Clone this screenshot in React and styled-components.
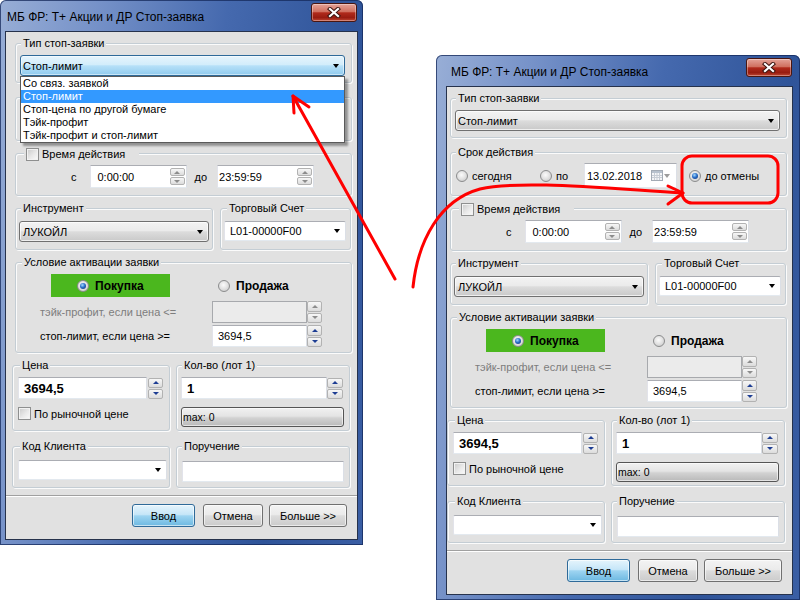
import React from "react";
import styled, { createGlobalStyle, css } from "styled-components";

const FONT = `"Liberation Sans", Arial, sans-serif`;
const BG = "#e1e1e1";

const px = v => (typeof v === "number" ? `${v}px` : v);

const GlobalStyle = createGlobalStyle`
  html, body { margin: 0; padding: 0; background: #fff; }
  body { font-family: ${FONT}; font-size: 11px; color: #000; }
`;

const Canvas = styled.div`
  position: relative;
  width: 800px;
  height: 600px;
  overflow: hidden;
  background: #fff;
`;

// window chrome
const Window = styled.div`
  position: absolute;
  left: ${p => p.$x}px;
  top: ${p => p.$y}px;
  display: flex;
  flex-direction: column;
  padding: 0 ${p => p.$frameR}px 6px ${p => p.$frameL}px;
  border-radius: 6px 6px 0 0;
  background: linear-gradient(100deg, #98aed6 0%, #7591c8 22%, #4569ae 50%, #2f5499 78%, #3a5ea4 100%);
  box-shadow: inset 0 0 0 1px rgba(20, 40, 90, 0.75);
`;

const TitleBar = styled.div`
  height: 32px;
  display: flex;
  justify-content: space-between;
  align-items: flex-start;
`;

const Title = styled.div`
  padding: 9px 0 0 ${p => p.$pad}px;
  font-size: 12px;
  line-height: 16px;
  color: #000;
  white-space: nowrap;
`;

const CloseButton = styled.div`
  box-sizing: border-box;
  width: 46px;
  height: 19px;
  margin-top: 3px;
  border: 1px solid #4a1610;
  border-radius: 3px;
  background: linear-gradient(#e4a398 0%, #d0705f 45%, #b02a1b 52%, #981c10 80%, #c04834 100%);
  box-shadow: inset 0 0 0 1px rgba(255, 255, 255, 0.35);
  display: flex;
  align-items: center;
  justify-content: center;
`;

const Client = styled.div`
  width: ${p => p.$w}px;
  background: ${BG};
  box-shadow: 0 0 0 1px #26324c;
  display: flex;
  flex-direction: column;
`;

const Body = styled.div`
  display: flex;
  flex-direction: column;
  padding: 11px 5px 7px ${p => p.$padL}px;
`;

const Footer = styled.div`
  display: flex;
  justify-content: flex-end;
  border-top: 1px solid #a0a0a0;
  box-shadow: inset 0 1px 0 #fff;
  padding: 8px 10px 12px;
`;

// group boxes
const Group = styled.div`
  position: relative;
  box-sizing: border-box;
  width: ${p => (p.$w ? `${p.$w}px` : "auto")};
  height: ${p => p.$h}px;
  margin-top: ${p => p.$mt ?? 0}px;
  padding: ${p => p.$pad};
  border: 1px solid #c4cdd4;
  border-radius: 3px;
  box-shadow: inset 1px 1px 0 #fbfbfb, 1px 1px 0 #fbfbfb;
`;

const Legend = styled.span`
  position: absolute;
  top: ${p => p.$top ?? -8}px;
  left: ${p => p.$x ?? 5}px;
  display: flex;
  align-items: center;
  gap: 3px;
  padding: 0 ${p => p.$pr ?? 2}px 0 2px;
  line-height: 14px;
  background: ${BG};
  white-space: nowrap;
  visibility: ${p => (p.$hidden ? "hidden" : "visible")};
`;

const Row = styled.div`
  display: flex;
  gap: ${p => p.$gap ?? 7}px;
  margin-top: ${p => p.$mt ?? 0}px;
  margin-left: ${p => p.$ml ?? 0}px;
`;

const Line = styled.div`
  display: flex;
  align-items: center;
  margin-top: ${p => p.$mt ?? 0}px;
  visibility: ${p => (p.$hidden ? "hidden" : "visible")};
`;

const Label = styled.span`
  margin-left: ${p => p.$ml ?? 0}px;
  white-space: nowrap;
  color: ${p => (p.$muted ? "#7d7d7d" : "#000")};
`;

// controls
const comboKinds = {
  gray: css`
    border: 1px solid #707070;
    border-radius: 3px;
    background: linear-gradient(#f3f3f3 0%, #ebebeb 45%, #dcdcdc 52%, #c9c9c9 100%);
    box-shadow: inset 0 0 0 1px rgba(255, 255, 255, 0.7);
  `,
  focus: css`
    border: 1px solid #2f6a99;
    border-radius: 3px;
    background: linear-gradient(#e6f4fc 0%, #d3edfb 45%, #b6e0f8 52%, #90cbee 100%);
    box-shadow: inset 0 0 0 1px rgba(255, 255, 255, 0.5);
  `,
  white: css`
    border: 1px solid;
    border-color: #abadb3 #dbdfe6 #e3e9ef #e2e3ea;
    border-radius: 2px;
    background: #fff;
  `,
};

const ComboHolder = styled.div`
  position: relative;
`;

const Combo = styled.div`
  box-sizing: border-box;
  width: ${p => (p.$w ? `${p.$w}px` : "auto")};
  height: ${p => p.$h ?? 21}px;
  display: flex;
  align-items: center;
  justify-content: space-between;
  padding: 0 5px 0 ${p => p.$pl ?? 3}px;
  white-space: nowrap;
  ${p => comboKinds[p.$kind]}
`;

const Arrow = styled.span`
  width: 0;
  height: 0;
  flex-shrink: 0;
  margin-left: ${p => px(p.$ml ?? 0)};
  border-left: 3.5px solid transparent;
  border-right: 3.5px solid transparent;
  border-top: 4px solid ${p => p.$color || "#000"};
`;

const DropList = styled.div`
  position: absolute;
  top: 100%;
  left: 0;
  right: 0;
  z-index: 5;
  background: #fff;
  border: 1px solid #5a5a5a;
  box-shadow: 3px 3px 2px rgba(0, 0, 0, 0.35);
`;

const DropItem = styled.div`
  height: 13px;
  line-height: 13px;
  padding-left: 2px;
  white-space: nowrap;
  ${p => p.$sel && css`background: #3399ff; color: #fff;`}
`;

const Field = styled.div`
  box-sizing: border-box;
  width: ${p => p.$w}px;
  height: ${p => p.$h ?? 22}px;
  margin-left: ${p => p.$ml ?? 0}px;
  display: flex;
  align-items: center;
  padding: 0 ${p => p.$pr ?? 0}px 0 ${p => p.$pl ?? 5}px;
  border: 1px solid;
  border-color: ${p => (p.$disabled ? "#a7a9ad" : "#abadb3 #dbdfe6 #e3e9ef #e2e3ea")};
  background: ${p => (p.$disabled ? "#ebebeb" : "#fff")};
  font-size: ${p => (p.$bold ? 13 : 11)}px;
  font-weight: ${p => (p.$bold ? 700 : 400)};
  white-space: nowrap;
`;

const SpinBox = styled.div`
  display: flex;
  flex-direction: column;
  gap: 1px;
  flex-shrink: 0;
  width: ${p => p.$w}px;
  height: ${p => p.$h}px;
  margin-left: ${p => px(p.$ml ?? 0)};
  margin-right: ${p => px(p.$mr ?? 0)};
`;

const SpinBtn = styled.div`
  flex: 1;
  box-sizing: border-box;
  border: 1px solid #b2b2b2;
  border-radius: 2px;
  background: linear-gradient(#f7f7f7, #dcdcdc);
  display: flex;
  align-items: center;
  justify-content: center;
`;

const Tri = styled.span`
  width: 0;
  height: 0;
  border-left: 3px solid transparent;
  border-right: 3px solid transparent;
  ${p => (p.$up ? css`border-bottom: 3px solid ${p.$c};` : css`border-top: 3px solid ${p.$c};`)}
`;

function Spin({ w = 15, h, active, ml, mr }) {
  const c = active ? "#1d3d93" : "#8c8c8c";
  return (
    <SpinBox $w={w} $h={h} $ml={ml} $mr={mr}>
      <SpinBtn><Tri $up $c={c} /></SpinBtn>
      <SpinBtn><Tri $c={c} /></SpinBtn>
    </SpinBox>
  );
}

const Radio = styled.span`
  box-sizing: border-box;
  width: 12px;
  height: 12px;
  flex-shrink: 0;
  border-radius: 50%;
  border: 1px solid #8b8c8d;
  background: radial-gradient(circle at 45% 40%, #fbfbfb 0%, #e4e4e4 45%, #c2c2c2 100%);
  display: inline-flex;
  align-items: center;
  justify-content: center;
  ${p => p.$on && css`
    &::after {
      content: "";
      width: 6px;
      height: 6px;
      border-radius: 50%;
      background: radial-gradient(circle at 40% 35%, #a6dbff 0%, #2a6fc9 45%, #0b2a6e 100%);
    }
  `}
`;

const Check = styled.span`
  box-sizing: border-box;
  width: 13px;
  height: 13px;
  flex-shrink: 0;
  border: 1px solid #8e8f8f;
  background: linear-gradient(135deg, #c9c9c9 0%, #e9e9e9 55%, #fbfbfb 100%);
  box-shadow: inset 0 0 0 1px #f2f2f2;
`;

const Option = styled.label`
  display: flex;
  align-items: center;
  gap: ${p => p.$gap ?? 4}px;
  width: ${p => (p.$w ? `${p.$w}px` : "auto")};
  margin-left: ${p => p.$ml ?? 0}px;
  white-space: nowrap;
`;

const SideOption = styled.div`
  box-sizing: border-box;
  display: flex;
  align-items: center;
  gap: 6px;
  height: 23px;
  width: ${p => (p.$active ? "119px" : "auto")};
  margin-left: ${p => p.$ml ?? 0}px;
  padding-left: ${p => (p.$active ? 26 : 0)}px;
  background: ${p => (p.$active ? "#4bb71e" : "transparent")};
  font-size: 12px;
  font-weight: 700;
`;

const PriceGrid = styled.div`
  display: grid;
  grid-template-columns: 172px 95px 15px;
  row-gap: 2px;
  align-items: center;
  margin: 4px 0 0 -35px;
  padding-left: 24px;
`;

const MaxButton = styled.div`
  box-sizing: border-box;
  width: 163px;
  height: 20px;
  margin-top: 8px;
  display: flex;
  align-items: center;
  padding-left: 1px;
  font-size: 10.5px;
  border: 1px solid #555;
  border-radius: 3px;
  background: linear-gradient(#f1f1f1 0%, #e4e4e4 45%, #d2d2d2 55%, #b9b9b9 100%);
  box-shadow: inset 0 0 0 1px rgba(255, 255, 255, 0.6);
`;

const Button = styled.div`
  box-sizing: border-box;
  width: ${p => p.$w}px;
  height: 23px;
  margin-left: ${p => p.$ml ?? 0}px;
  display: flex;
  align-items: center;
  justify-content: center;
  border-radius: 3px;
  border: 1px solid ${p => (p.$primary ? "#2f6a99" : "#707070")};
  background: ${p =>
    p.$primary
      ? "linear-gradient(#e5f4fc 0%, #c6e6f8 45%, #9dd4f1 52%, #6cb8e1 100%)"
      : "linear-gradient(#f3f3f3 0%, #ebebeb 45%, #dcdcdc 52%, #cbcbcb 100%)"};
  box-shadow: inset 0 0 0 1px rgba(255, 255, 255, 0.6);
`;

const Overlay = styled.svg`
  position: absolute;
  left: 0;
  top: 0;
  z-index: 20;
  pointer-events: none;
`;

const orderTypes = [
  "Со связ. заявкой",
  "Стоп-лимит",
  "Стоп-цена по другой бумаге",
  "Тэйк-профит",
  "Тэйк-профит и стоп-лимит",
];

function CloseIcon() {
  return (
    <svg width="14" height="11" viewBox="0 0 14 11">
      <path d="M3 2 L11 9 M11 2 L3 9" stroke="#3d1510" strokeWidth="4.2" strokeLinecap="square" />
      <path d="M3 2 L11 9 M11 2 L3 9" stroke="#fff" strokeWidth="2.2" strokeLinecap="square" />
    </svg>
  );
}

function CalendarIcon() {
  return (
    <svg width="12" height="11" viewBox="0 0 12 11" style={{ marginLeft: "auto" }}>
      <rect x="0.5" y="0.5" width="11" height="10" fill="#f5f6f8" stroke="#a3abb5" />
      <rect x="1" y="1" width="10" height="2" fill="#b8c2ce" />
      <path d="M1 5.5H11M1 7.5H11M3.5 3V10M6 3V10M8.5 3V10" stroke="#c7cdd5" strokeWidth="1" />
    </svg>
  );
}

function Dialog({ x, y, frameL, frameR, clientW, padL, titlePad, open }) {
  return (
    <Window $x={x} $y={y} $frameL={frameL} $frameR={frameR}>
      <TitleBar>
        <Title $pad={titlePad}>МБ ФР: Т+ Акции и ДР Стоп-заявка</Title>
        <CloseButton><CloseIcon /></CloseButton>
      </TitleBar>
      <Client $w={clientW}>
        <Body $padL={padL}>
          <Group $h={40} $pad="11px 6px 0 4px">
            <Legend>Тип стоп-заявки</Legend>
            <ComboHolder>
              <Combo $kind={open ? "focus" : "gray"} $pl={2}>
                Стоп-лимит
                <Arrow />
              </Combo>
              {open && (
                <DropList>
                  {orderTypes.map(t => (
                    <DropItem key={t} $sel={t === "Стоп-лимит"}>{t}</DropItem>
                  ))}
                </DropList>
              )}
            </ComboHolder>
          </Group>

          {/* under the open list this group is covered */}
          <Group $h={44} $mt={14} $pad="10px 0 0 5px">
            <Legend $hidden={open}>Срок действия</Legend>
            <Line $hidden={open}>
              <Option $w={84}><Radio />сегодня</Option>
              <Option $w={44}><Radio />по</Option>
              <Field $w={93} $h={25} $pl={2} $pr={6}>
                13.02.2018
                <CalendarIcon />
                <Arrow $color="#9c9c9c" $ml={1} />
              </Field>
              <Option $ml={12}><Radio $on />до отмены</Option>
            </Line>
          </Group>

          <Group $h={43} $mt={12} $pad="11px 0 0 55px">
            <Legend $x={8} $top={-7} $pr={14}><Check />Время действия</Legend>
            <Line>
              <Label>с</Label>
              <Field $w={97} $h={23} $pl={7} $ml={13}>
                0:00:00
                <Spin h={17} ml="auto" mr={1} />
              </Field>
              <Label $ml={8}>до</Label>
              <Field $w={97} $h={23} $pl={1} $ml={10}>
                23:59:59
                <Spin h={17} ml="auto" mr={1} />
              </Field>
            </Line>
          </Group>

          <Row $mt={12}>
            <Group $w={198} $h={42} $pad="12px 0 0 3px">
              <Legend>Инструмент</Legend>
              <Combo $kind="gray" $w={190}>ЛУКОЙЛ<Arrow /></Combo>
            </Group>
            <Group $w={131} $h={42} $pad="12px 0 0 3px">
              <Legend $x={6}>Торговый Счет</Legend>
              <Combo $kind="white" $w={122} $h={20} $pl={5}>L01-00000F00<Arrow /></Combo>
            </Group>
          </Row>

          <Group $h={91} $mt={12} $pad="11px 0 0 35px">
            <Legend $x={6}>Условие активации заявки</Legend>
            <Line>
              <SideOption $active><Radio $on />Покупка</SideOption>
              <SideOption $ml={48}><Radio />Продажа</SideOption>
            </Line>
            <PriceGrid>
              <Label $muted>тэйк-профит, если цена &lt;=</Label>
              <Field $w={95} $disabled />
              <Spin h={22} />
              <Label>стоп-лимит, если цена &gt;=</Label>
              <Field $w={95}>3694,5</Field>
              <Spin h={22} active />
            </PriceGrid>
          </Group>

          <Row $mt={12} $ml={-3} $gap={6}>
            <Group $w={158} $h={66} $pad="11px 0 0 5px">
              <Legend $x={7}>Цена</Legend>
              <Line>
                <Field $w={129} $bold>3694,5</Field>
                <Spin h={21} active ml={1} />
              </Line>
              <Line $mt={8}>
                <Option $gap={3}><Check />По рыночной цене</Option>
              </Line>
            </Group>
            <Group $w={174} $h={66} $pad="11px 0 0 4px">
              <Legend>Кол-во (лот 1)</Legend>
              <Line>
                <Field $w={146} $bold>1</Field>
                <Spin w={16} h={21} active />
              </Line>
              <MaxButton>max: 0</MaxButton>
            </Group>
          </Row>

          <Row $mt={15} $ml={-3} $gap={6}>
            <Group $w={158} $h={42} $pad="13px 0 0 5px">
              <Legend $x={7}>Код Клиента</Legend>
              <Combo $kind="white" $w={149} $h={20}><span /><Arrow /></Combo>
            </Group>
            <Group $w={174} $h={42} $pad="14px 0 0 5px">
              <Legend>Поручение</Legend>
              <Field $w={162} $h={21} />
            </Group>
          </Row>
        </Body>
        <Footer>
          <Button $w={63} $primary>Ввод</Button>
          <Button $w={60} $ml={8}>Отмена</Button>
          <Button $w={78} $ml={6}>Больше &gt;&gt;</Button>
        </Footer>
      </Client>
    </Window>
  );
}

export default function App() {
  return (
    <>
      <GlobalStyle />
      <Canvas>
        <Dialog x={0} y={0} frameL={6} frameR={6} clientW={351} padL={9} titlePad={1} open />
        <Dialog x={436} y={55} frameL={11} frameR={8} clientW={345} padL={3} titlePad={4} />
        <Overlay width="800" height="600" viewBox="0 0 800 600">
          <g fill="none" stroke="#ff0000" strokeWidth="3" strokeLinecap="round" strokeLinejoin="round">
            <path d="M395 279 L293 96" />
            <path d="M294 113 L293 96 L309 107" />
            <path d="M413 287 C418 240 440 200 480 189 C520 180 600 188 683 193" />
            <path d="M668 186 L683 193 L668 204" />
            <rect x="682" y="156" width="96" height="47" rx="10" />
          </g>
        </Overlay>
      </Canvas>
    </>
  );
}
